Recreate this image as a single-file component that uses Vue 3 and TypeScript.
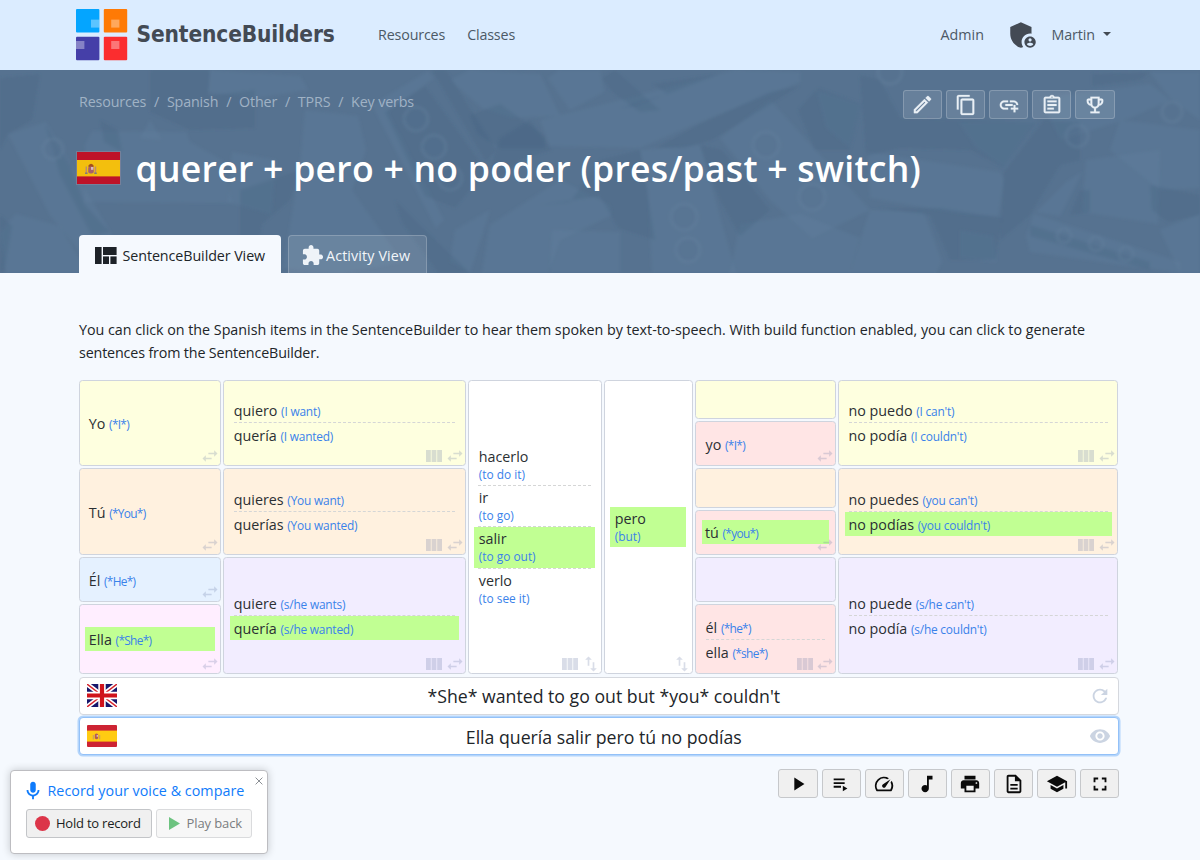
<script setup lang="ts">
interface Item { es: string; en: string; on?: boolean }
interface Cell { area: string; tone: string; items: Item[]; stacked?: boolean; cols?: boolean; swap?: 'h' | 'v' }

const navLeft = ['Resources', 'Classes']
const crumbs = ['Resources', 'Spanish', 'Other', 'TPRS', 'Key verbs']

const heroActions: { name: string; size: number; d: string }[] = [
  { name: 'Edit', size: 23, d: 'M14.06 9.02l.92.92L5.92 19H5v-.92l9.06-9.06M17.66 3c-.25 0-.51.1-.7.29l-1.83 1.83 3.75 3.75 1.83-1.83c.39-.39.39-1.02 0-1.41l-2.34-2.34c-.2-.2-.45-.29-.71-.29zm-3.6 3.19L3 17.25V21h3.75L17.81 9.94l-3.75-3.75z' },
  { name: 'Copy', size: 22, d: 'M16 1H4c-1.1 0-2 .9-2 2v14h2V3h12V1zm3 4H8c-1.1 0-2 .9-2 2v14c0 1.1.9 2 2 2h11c1.1 0 2-.9 2-2V7c0-1.1-.9-2-2-2zm0 16H8V7h11v14z' },
  { name: 'Add link', size: 22, d: 'M8 11h8v2H8v-2zm12.1 1H22c0-2.76-2.24-5-5-5h-4v1.9h4c1.71 0 3.1 1.39 3.1 3.1zM3.9 12c0-1.71 1.39-3.1 3.1-3.1h4V7H7c-2.76 0-5 2.24-5 5s2.24 5 5 5h4v-1.9H7c-1.71 0-3.1-1.39-3.1-3.1zM19 12h-2v3h-3v2h3v3h2v-3h3v-2h-3v-3z' },
  { name: 'Assign', size: 22, d: 'M7 15h7v2H7zm0-4h10v2H7zm0-4h10v2H7zm12-4h-4.18C14.4 1.84 13.3 1 12 1c-1.3 0-2.4.84-2.82 2H5c-.14 0-.27.01-.4.04-.39.08-.74.28-1.01.55-.18.18-.33.4-.43.64-.1.23-.16.49-.16.77v14c0 .27.06.54.16.78s.25.45.43.64c.27.27.62.47 1.01.55.13.02.26.03.4.03h14c1.1 0 2-.9 2-2V5c0-1.1-.9-2-2-2zm-7-.25c.41 0 .75.34.75.75s-.34.75-.75.75-.75-.34-.75-.75.34-.75.75-.75zM19 19H5V5h14v14z' },
  { name: 'Compete', size: 22, d: 'M19 5h-2V3H7v2H5c-1.1 0-2 .9-2 2v1c0 2.55 1.92 4.63 4.39 4.94.63 1.5 1.98 2.63 3.61 2.96V19H7v2h10v-2h-4v-3.1c1.63-.33 2.98-1.46 3.61-2.96C19.08 12.63 21 10.55 21 8V7c0-1.1-.9-2-2-2zM5 8V7h2v3.82C5.84 10.4 5 9.3 5 8zm7 6c-1.65 0-3-1.35-3-3V5h6v6c0 1.65-1.35 3-3 3zm7-6c0 1.3-.84 2.4-2 2.82V7h2v1z' },
]

const tools: { name: string; d: string }[] = [
  { name: 'Play', d: 'M8 5v14l11-7z' },
  { name: 'Playlist', d: 'M4 10h12v2H4zm0-4h12v2H4zm0 8h8v2H4zm10 0v6l5-3z' },
  { name: 'Speed', d: 'M20.38 8.57l-1.23 1.85a8 8 0 0 1-.22 7.58H5.07A8 8 0 0 1 15.58 6.85l1.85-1.23A10 10 0 0 0 3.35 19a2 2 0 0 0 1.72 1h13.85a2 2 0 0 0 1.74-1 10 10 0 0 0-.27-10.44zm-9.79 6.84a2 2 0 0 0 2.83 0l5.66-8.49-8.49 5.66a2 2 0 0 0 0 2.83z' },
  { name: 'Music', d: 'M12 3v10.55c-.59-.34-1.27-.55-2-.55-2.21 0-4 1.79-4 4s1.79 4 4 4 4-1.79 4-4V7h4V3h-6z' },
  { name: 'Print', d: 'M19 8H5c-1.66 0-3 1.34-3 3v6h4v4h12v-4h4v-6c0-1.66-1.34-3-3-3zm-3 11H8v-5h8v5zm3-7c-.55 0-1-.45-1-1s.45-1 1-1 1 .45 1 1-.45 1-1 1zm-1-9H6v4h12V3z' },
  { name: 'Document', d: 'M8 16h8v2H8zm0-4h8v2H8zm6-10H6c-1.1 0-2 .9-2 2v16c0 1.1.89 2 1.99 2H18c1.1 0 2-.9 2-2V8l-6-6zm4 18H6V4h7v5h5v11z' },
  { name: 'Learn', d: 'M5 13.18v4L12 21l7-3.82v-4L12 17l-7-3.82zM12 3L1 9l11 6 9-4.91V17h2V9L12 3z' },
  { name: 'Fullscreen', d: 'M7 14H5v5h5v-2H7v-3zm-2-4h2V7h3V5H5v5zm12 7h-3v2h5v-5h-2v3zM14 5v2h3v3h2V5h-5z' },
]

const swapPaths = {
  h: 'M6.99 11L3 15l3.99 4v-3H14v-2H6.99v-3zM21 9l-3.99-4v3H10v2h7.01v3L21 9z',
  v: 'M16 17.01V10h-2v7.01h-3L15 21l4-3.99h-3zM9 3L5 6.99h3V14h2V6.99h3L9 3z',
}

const cells: Cell[] = [
  { area: 'a1', tone: 'yellow', swap: 'h', items: [{ es: 'Yo', en: '(*I*)' }] },
  { area: 'a2', tone: 'orange', swap: 'h', items: [{ es: 'Tú', en: '(*You*)' }] },
  { area: 'a3', tone: 'blue', swap: 'h', items: [{ es: 'Él', en: '(*He*)' }] },
  { area: 'a4', tone: 'pink', swap: 'h', items: [{ es: 'Ella', en: '(*She*)', on: true }] },
  { area: 'b1', tone: 'yellow', swap: 'h', cols: true, items: [{ es: 'quiero', en: '(I want)' }, { es: 'quería', en: '(I wanted)' }] },
  { area: 'b2', tone: 'orange', swap: 'h', cols: true, items: [{ es: 'quieres', en: '(You want)' }, { es: 'querías', en: '(You wanted)' }] },
  { area: 'b3', tone: 'violet', swap: 'h', cols: true, items: [{ es: 'quiere', en: '(s/he wants)' }, { es: 'quería', en: '(s/he wanted)', on: true }] },
  { area: 'c1', tone: 'white', swap: 'v', cols: true, stacked: true, items: [{ es: 'hacerlo', en: '(to do it)' }, { es: 'ir', en: '(to go)' }, { es: 'salir', en: '(to go out)', on: true }, { es: 'verlo', en: '(to see it)' }] },
  { area: 'd1', tone: 'white', swap: 'v', stacked: true, items: [{ es: 'pero', en: '(but)', on: true }] },
  { area: 'e1', tone: 'yellow', items: [] },
  { area: 'e2', tone: 'red', swap: 'h', items: [{ es: 'yo', en: '(*I*)' }] },
  { area: 'e3', tone: 'orange', items: [] },
  { area: 'e4', tone: 'red', swap: 'h', items: [{ es: 'tú', en: '(*you*)', on: true }] },
  { area: 'e5', tone: 'violet', items: [] },
  { area: 'e6', tone: 'red', swap: 'h', cols: true, items: [{ es: 'él', en: '(*he*)' }, { es: 'ella', en: '(*she*)' }] },
  { area: 'f1', tone: 'yellow', swap: 'h', cols: true, items: [{ es: 'no puedo', en: "(I can't)" }, { es: 'no podía', en: "(I couldn't)" }] },
  { area: 'f2', tone: 'orange', swap: 'h', cols: true, items: [{ es: 'no puedes', en: "(you can't)" }, { es: 'no podías', en: "(you couldn't)", on: true }] },
  { area: 'f3', tone: 'violet', swap: 'h', cols: true, items: [{ es: 'no puede', en: "(s/he can't)" }, { es: 'no podía', en: "(s/he couldn't)" }] },
]

const darkShapes: string[] = [
  '150,70 210,70 208,96 255,90 255,128 190,130 150,112',
  '0,78 40,74 32,120 8,134 0,150',
  '45,124 70,165 85,205 110,232 92,236 60,175',
  '0,215 12,226 4,273 0,273',
  '385,112 425,86 486,170 455,208 425,196',
  '432,70 446,70 496,150 486,162',
  '490,170 500,138 530,120 552,150 520,160 500,178',
  '395,200 420,225 470,273 438,273 402,222',
  '470,115 500,104 545,136 545,148 500,148 478,134',
  '602,78 615,70 660,110 640,112 612,92',
  '540,205 570,202 600,160 640,150 655,240 618,228 600,196',
  '620,108 668,94 652,84 720,74 635,106',
  '655,148 700,124 770,92 800,86 712,140 684,148',
  '700,145 722,150 770,210 740,236 720,200',
  '798,110 818,88 862,104 850,150 815,150',
  '860,75 880,80 900,118 1036,122 1004,168 970,150 900,148 866,156',
  '876,208 940,208 1002,218 995,260 950,260 930,215',
  '1004,172 1044,120 1080,122 1080,160 1060,165 1030,215 1000,240',
  '1092,74 1150,72 1140,80 1092,86',
  '1150,185 1200,195 1200,215 1168,222 1152,210',
  '1070,215 1090,212 1090,190 1080,190',
  '240,190 300,170 290,200 262,224 256,262 240,262',
  '1030,225 1150,262 1150,270 1030,236',
  '100,120 118,130 122,152 104,142',
]
const lightShapes: string[] = [
  '8,134 46,122 112,235 88,262 50,215',
  '85,145 92,131 186,132 190,142 222,160 232,203 84,202',
  '232,152 276,160 272,215 228,202',
  '305,110 358,116 366,150 352,190 402,262 340,273 283,268 300,166',
  '0,232 16,214 60,226 88,273 6,273',
  '150,120 140,138 162,140',
  '372,105 428,71 434,78 388,112 444,220 436,228',
  '450,80 470,70 540,74 560,116 512,118 482,108',
  '560,70 600,70 604,92 570,110 548,78',
  '540,120 620,100 735,70 800,72 800,82 700,122 640,148 550,146',
  '490,225 560,180 610,205 612,215 560,240 548,273 482,273',
  '455,230 490,210 470,273 450,262',
  '552,230 620,232 620,273 550,273',
  '720,138 770,100 870,210 812,238 770,200',
  '640,150 700,145 736,273 652,273 648,190',
  '740,224 800,214 860,238 850,273 730,273',
  '816,90 862,104 850,148 826,128',
  '868,152 1000,172 1004,180 998,216 962,214 870,198',
  '958,122 1036,120 1005,168 976,148',
  '960,230 994,236 996,262 960,258',
  '870,210 924,212 942,262 936,273 850,273',
  '1034,214 1180,262 1180,273 1030,252 1026,236',
  '1086,160 1160,150 1158,224 1082,212',
  '1082,172 1060,216 1036,212 1066,182',
  '1120,120 1200,130 1200,188 1160,190 1110,150',
  '1160,230 1200,214 1200,273 1180,273',
  '1040,98 1150,84 1170,100 1130,118 1060,140',
  '1150,72 1200,72 1200,120 1170,98',
  '210,70 300,76 308,90 256,98 208,92',
]
const studs: [number, number, number][] = [
  [416, 119, 12], [434, 147, 12], [450, 178, 12], [766, 145, 13], [812, 197, 13], [684, 217, 13], [688, 250, 12],
  [53, 149, 10], [1077, 136, 11], [1172, 112, 10], [1064, 236, 7], [1096, 244, 7], [1126, 254, 7], [890, 72, 12],
]

// Starred glosses are set tighter than plain ones.
const isStarred = (s: string): boolean => s.includes('*')
</script>

<template>
  <div class="page">
    <header class="topbar">
      <a class="brand">
        <svg class="logo" width="52" height="52" viewBox="0 0 52 52">
          <rect x="0" y="0" width="23.4" height="23.4" rx="1" fill="#04a5ff" />
          <rect x="27.8" y="0" width="23.4" height="23.4" rx="1" fill="#ff7a05" />
          <rect x="0" y="27.8" width="23.4" height="23.4" rx="1" fill="#453fa8" />
          <rect x="27.8" y="27.8" width="23.4" height="23.4" rx="1" fill="#fb2d2f" />
          <g fill="#fff" fill-opacity=".35">
            <rect x="15" y="10.6" width="8.4" height="8" />
            <rect x="35.2" y="10.6" width="8.2" height="8" />
            <rect x="0" y="32" width="8.4" height="8" />
            <rect x="35.2" y="32" width="8.2" height="8" />
          </g>
        </svg>
        <span class="brand-name">SentenceBuilders</span>
      </a>
      <nav class="nav-left">
        <a v-for="n in navLeft" :key="n">{{ n }}</a>
      </nav>
      <nav class="nav-right">
        <a>Admin</a>
        <svg class="shield" width="34" height="34" viewBox="0 0 24 24" fill="#434a54">
          <path d="M17 11c.34 0 .67.04 1 .09V6.27L10.5 3 3 6.27v4.91c0 4.54 3.2 8.79 7.5 9.82.55-.13 1.08-.32 1.6-.55-.69-.98-1.1-2.17-1.1-3.45 0-3.31 2.69-6 6-6z" />
          <path fill-rule="evenodd" d="M17 13c-2.21 0-4 1.79-4 4s1.79 4 4 4 4-1.79 4-4-1.79-4-4-4zm0 1.38c.62 0 1.12.51 1.12 1.12s-.51 1.12-1.12 1.12-1.12-.51-1.12-1.12.5-1.12 1.12-1.12zm0 5.37c-.93 0-1.74-.46-2.24-1.17.05-.72 1.51-1.08 2.24-1.08s2.19.36 2.24 1.08c-.5.71-1.31 1.17-2.24 1.17z" />
        </svg>
        <a class="user"><span>Martin</span><i class="caret"></i></a>
      </nav>
    </header>

    <section class="hero">
      <svg class="bricks" viewBox="0 70 1200 203" preserveAspectRatio="none">
        <defs><filter id="soft"><feGaussianBlur stdDeviation="1.4" /></filter></defs>
        <g filter="url(#soft)">
          <polygon v-for="(p, i) in lightShapes" :key="'l' + i" :points="p" fill="#6384a6" fill-opacity=".22" />
          <polygon v-for="(p, i) in darkShapes" :key="'d' + i" :points="p" fill="#415f80" fill-opacity=".26" />
          <circle v-for="(s, i) in studs" :key="'s' + i" :cx="s[0]" :cy="s[1]" :r="s[2]" fill="#56728f" fill-opacity=".25" stroke="#6a87a5" stroke-opacity=".28" stroke-width="3" />
        </g>
      </svg>
      <div class="hero-inner">
        <div class="hero-top">
          <ol class="crumbs">
            <li v-for="c in crumbs" :key="c">{{ c }}</li>
          </ol>
          <div class="hero-actions">
            <button v-for="a in heroActions" :key="a.name" :aria-label="a.name" class="hbtn">
              <svg :width="a.size" :height="a.size" viewBox="0 0 24 24"><path :d="a.d" /></svg>
            </button>
          </div>
        </div>
        <div class="title-row">
          <svg class="flag-lg" width="43" height="32" viewBox="0 0 43 32">
            <rect width="43" height="32" fill="#be1228" />
            <rect y="8" width="43" height="16.4" fill="#f3bf0d" />
            <g>
              <rect x="8.6" y="14.5" width="1.4" height="7" fill="#b98b72" />
              <rect x="17.8" y="14.5" width="1.4" height="7" fill="#b98b72" />
              <path d="M11.5 13.2q2.6-3 5 0v2h-5z" fill="#a3501b" />
              <rect x="11.2" y="14.6" width="5.6" height="6.8" rx="2" fill="#a8606a" />
              <rect x="14" y="15" width="2.4" height="2.8" fill="#d9bfc0" />
              <rect x="8" y="20.6" width="2.6" height="1.2" fill="#6b6f8f" /><rect x="17.2" y="20.6" width="2.6" height="1.2" fill="#6b6f8f" />
            </g>
          </svg>
          <h1>querer + pero + no poder (pres/past + switch)</h1>
        </div>
        <div class="tabs">
          <a class="tab active">
            <svg width="22" height="17" viewBox="0 0 22 17" fill="#1d2228">
              <rect x="0" y="0" width="6.6" height="17" /><rect x="8" y="0" width="13.6" height="8" />
              <rect x="8" y="9.4" width="6" height="7.6" /><rect x="15.4" y="9.4" width="6.2" height="7.6" />
            </svg>
            <span>SentenceBuilder View</span>
          </a>
          <a class="tab ghost">
            <svg width="23" height="23" viewBox="0 0 24 24" fill="#eef3f8"><path d="M20.5 11H19V7c0-1.1-.9-2-2-2h-4V3.5C13 2.12 11.88 1 10.5 1S8 2.12 8 3.5V5H4c-1.1 0-1.99.9-1.99 2v3.8H3.5c1.49 0 2.7 1.21 2.7 2.7s-1.21 2.7-2.7 2.7H2V20c0 1.1.9 2 2 2h3.8v-1.5c0-1.49 1.21-2.7 2.7-2.7 1.49 0 2.7 1.21 2.7 2.7V22H17c1.1 0 2-.9 2-2v-4h1.5c1.38 0 2.5-1.12 2.5-2.5S21.88 11 20.5 11z" /></svg>
            <span>Activity View</span>
          </a>
        </div>
      </div>
    </section>

    <main class="content">
      <p class="intro">
        <span class="l1">You can click on the Spanish items in the SentenceBuilder to hear them spoken by text-to-speech. With build function enabled, you can click to generate</span><br />
        <span class="l2">sentences from the SentenceBuilder.</span>
      </p>

      <div class="builder">
        <div v-for="c in cells" :key="c.area" class="cell" :class="[c.area, c.tone, { stacked: c.stacked }]">
          <div v-for="(it, i) in c.items" :key="i" class="item" :class="{ on: it.on }">
            <span class="es">{{ it.es }}</span>{{ ' ' }}<span class="en" :class="{ starred: isStarred(it.en) }">{{ it.en }}</span>
          </div>
          <div v-if="c.swap" class="marks">
            <svg v-if="c.cols" width="16" height="12" viewBox="0 0 16 12" fill="currentColor">
              <rect width="4.8" height="12" /><rect x="5.6" width="4.8" height="12" /><rect x="11.2" width="4.8" height="12" />
            </svg>
            <svg width="20" height="20" viewBox="0 0 24 24" fill="currentColor"><path :d="swapPaths[c.swap]" /></svg>
          </div>
        </div>
      </div>

      <div class="sentence">
        <svg class="flag" width="30" height="23" viewBox="0 0 30 23">
          <rect width="30" height="23" fill="#16166b" />
          <path d="M0 0L30 23M30 0L0 23" stroke="#fff" stroke-width="4.6" />
          <path d="M0 0L15 11.5M30 23L15 11.5M30 0L15 11.5M0 23L15 11.5" stroke="#d5232d" stroke-width="1.4" />
          <path d="M15 0V23M0 11.5H30" stroke="#fff" stroke-width="7.4" />
          <path d="M15 0V23M0 11.5H30" stroke="#d0131b" stroke-width="4.2" />
        </svg>
        <span class="phrase">*She* wanted to go out but *you* couldn't</span>
        <svg width="22" height="22" viewBox="0 0 24 24" class="side"><path d="M17.65 6.35C16.2 4.9 14.21 4 12 4c-4.42 0-7.99 3.58-7.99 8s3.57 8 7.99 8c3.73 0 6.84-2.55 7.73-6h-2.08c-.82 2.33-3.04 4-5.65 4-3.31 0-6-2.69-6-6s2.69-6 6-6c1.66 0 3.14.69 4.22 1.78L13 11h7V4l-2.35 2.35z" /></svg>
      </div>
      <div class="sentence focus">
        <svg class="flag" width="30" height="22" viewBox="0 0 30 22">
          <rect width="30" height="22" rx="1" fill="#cd2333" />
          <rect y="5.6" width="30" height="11" fill="#ffcb12" />
          <rect x="5.8" y="10" width="1" height="4.4" fill="#c09a70" /><rect x="12.2" y="10" width="1" height="4.4" fill="#c09a70" />
          <path d="M7.8 9.4q1.7-1.8 3.4 0v3.8q-1.7 2.2-3.4 0z" fill="#b05a58" />
          <rect x="9.6" y="10" width="1.4" height="1.8" fill="#dcb9b4" />
        </svg>
        <span class="phrase">Ella quería salir pero tú no podías</span>
        <svg width="22" height="22" viewBox="0 0 24 24" class="side"><path d="M12 4.5C7 4.5 2.73 7.61 1 12c1.73 4.39 6 7.5 11 7.5s9.27-3.11 11-7.5c-1.73-4.39-6-7.5-11-7.5zM12 17c-2.76 0-5-2.24-5-5s2.24-5 5-5 5 2.24 5 5-2.24 5-5 5zm0-8c-1.66 0-3 1.34-3 3s1.34 3 3 3 3-1.34 3-3-1.34-3-3-3z" /></svg>
      </div>

      <div class="tools">
        <button v-for="t in tools" :key="t.name" :aria-label="t.name" class="tbtn">
          <svg width="22" height="22" viewBox="0 0 24 24"><path :d="t.d" /></svg>
        </button>
      </div>
    </main>

    <aside class="recorder">
      <svg class="close" width="8" height="8" viewBox="0 0 8 8"><path d="M.6.6l6.8 6.8M7.4.6L.6 7.4" stroke="#8b8f94" stroke-width="1" /></svg>
      <div class="rec-title">
        <svg width="22" height="22" viewBox="0 0 24 24" fill="#0f7bfb"><path d="M12 14c1.66 0 3-1.34 3-3V5c0-1.66-1.34-3-3-3S9 3.34 9 5v6c0 1.66 1.34 3 3 3z" /><path d="M17 11c0 2.76-2.24 5-5 5s-5-2.24-5-5H5c0 3.53 2.61 6.43 6 6.92V21h2v-3.08c3.39-.49 6-3.39 6-6.92h-2z" /></svg>
        <span>Record your voice &amp; compare</span>
      </div>
      <div class="rec-buttons">
        <button class="rbtn hold"><i class="dot"></i><span>Hold to record</span></button>
        <button class="rbtn back"><svg width="11" height="13" viewBox="0 0 11 13"><path d="M0 0v13l11-6.5z" fill="#6dc380" /></svg><span>Play back</span></button>
      </div>
    </aside>
  </div>
</template>

<style>
body { margin: 0; background: #f5f9fe; }
</style>

<style scoped>
* { box-sizing: border-box; }
.page {
  position: relative; width: 1200px; height: 860px; overflow: hidden; background: #f5f9fe;
  font-family: "Open Sans", "Noto Sans", sans-serif; font-size: 14.3px; color: #212529;
}
button { font: inherit; padding: 0; margin: 0; }
svg { display: block; flex: none; }

.topbar { display: flex; align-items: center; height: 70px; padding: 0 89px 0 75.5px; background: #dbecff; color: #4c5966; }
.brand { display: flex; align-items: center; gap: 9px; width: 302.5px; }
.brand-name { font-family: "DejaVu Sans Condensed", "DejaVu Sans", sans-serif; font-stretch: condensed; font-weight: 700; font-size: 22.5px; letter-spacing: -.13px; color: #434a54; white-space: nowrap; padding-bottom: 2px; }
.nav-left { display: flex; gap: 22px; flex: 1; letter-spacing: -.16px; padding-bottom: 2px; }
.nav-right { display: flex; align-items: center; }
.nav-right a:first-child, .user span { padding-bottom: 2px; }
.shield { margin: 0 11.5px 0 22px; }
.user { display: flex; align-items: center; gap: 8px; letter-spacing: -.1px; }
.caret { border: 4.5px solid transparent; border-top-color: #434a54; border-bottom: 0; margin-bottom: 2px; }

.hero { position: relative; height: 203px; background: #567290; }
.bricks { position: absolute; inset: 0; width: 1200px; height: 203px; }
.hero-inner { position: relative; display: flex; flex-direction: column; height: 100%; padding: 20px 85.5px 0 77px; }
.hero-top { display: flex; justify-content: space-between; height: 29px; }
.crumbs { display: flex; margin: 0; padding: 0 0 0 2px; list-style: none; line-height: 24px; color: #a0b2c5; letter-spacing: -.15px; }
.crumbs li + li::before { content: "/"; padding: 0 7.8px; }
.hero-actions { display: flex; gap: 3.8px; }
.hbtn { display: flex; align-items: center; justify-content: center; width: 39.3px; height: 29px; border: 1px solid rgba(255, 255, 255, .2); border-radius: 3px; background: rgba(255, 255, 255, .1); fill: #eaf0f6; stroke: #eaf0f6; stroke-width: .25px; }
.title-row { display: flex; align-items: center; gap: 15.5px; height: 60px; margin-top: 19px; }
.flag-lg { margin-top: -1px; outline: 1px solid rgba(170, 150, 165, .35); }
h1 { margin: 0; font-size: 35.6px; font-weight: 600; line-height: 60px; letter-spacing: .26px; color: #fff; white-space: nowrap; }
.tabs { display: flex; gap: 7.5px; margin: auto 0 0 2px; }
.tab { display: flex; align-items: center; height: 38px; border-radius: 4px 4px 0 0; white-space: nowrap; }
.active { width: 201.5px; padding: 3px 0 0 15.5px; gap: 6px; background: #f5f9fe; letter-spacing: -.08px; }
.ghost { width: 139px; padding: 2px 0 0 11.5px; gap: 2.5px; border: 1px solid rgba(255, 255, 255, .2); border-bottom: 0; background: rgba(255, 255, 255, .1); color: #f2f6fa; letter-spacing: .12px; }
.tab span { padding-bottom: 1px; }

.content { padding: 46px 81px 0 79px; }
.intro { margin: 0; height: 60.6px; line-height: 22.5px; white-space: nowrap; }
.l1 { letter-spacing: -.017px; }
.l2 { letter-spacing: -.15px; }

.builder {
  display: grid; gap: 2.3px 2.4px; width: 1039.4px;
  grid-template-columns: 142px 242.2px 133.6px 88.8px 140.6px 280.2px;
  grid-template-rows: 39.3px 44.9px 39.3px 44.9px 45px 69.6px;
}
.cell { position: relative; display: flex; flex-direction: column; justify-content: center; padding: 0 5.4px; border: 1px solid #cfd4de; border-radius: 3.5px; color: #2b2f33; min-width: 0; }
.a1 { grid-area: 1 / 1 / 3 / 2; } .a2 { grid-area: 3 / 1 / 5 / 2; } .a3 { grid-area: 5 / 1 / 6 / 2; } .a4 { grid-area: 6 / 1 / 7 / 2; }
.b1 { grid-area: 1 / 2 / 3 / 3; } .b2 { grid-area: 3 / 2 / 5 / 3; } .b3 { grid-area: 5 / 2 / 7 / 3; }
.c1 { grid-area: 1 / 3 / 7 / 4; } .d1 { grid-area: 1 / 4 / 7 / 5; }
.e1 { grid-area: 1 / 5 / 2 / 6; } .e2 { grid-area: 2 / 5 / 3 / 6; } .e3 { grid-area: 3 / 5 / 4 / 6; }
.e4 { grid-area: 4 / 5 / 5 / 6; } .e5 { grid-area: 5 / 5 / 6 / 6; } .e6 { grid-area: 6 / 5 / 7 / 6; }
.f1 { grid-area: 1 / 6 / 3 / 7; } .f2 { grid-area: 3 / 6 / 5 / 7; } .f3 { grid-area: 5 / 6 / 7 / 7; }
.yellow { background: #feffdf; } .orange { background: #fff1df; } .blue { background: #e5f1ff; }
.pink { background: #ffeeff; } .violet { background: #f2edff; } .red { background: #ffe5e5; } .white { background: #fff; }

.item { position: relative; height: 24px; line-height: 25px; padding: 0 4px; white-space: nowrap; }
.a1 .item, .a2 .item, .a3 .item, .a4 .item, .e4 .item { padding-left: 3.4px; }
.item + .item { margin-top: 1px; }
.item + .item::before { content: ""; position: absolute; left: 4px; right: 4px; top: -1px; border-top: 1px dashed #d5d6d6; }
.item.on { background: #c1ff93; }
.es { font-size: 14.3px; }
.en { font-size: 11.9px; letter-spacing: -.2px; color: #3a82ea; }
.en.starred { letter-spacing: -.7px; }
.stacked .item { height: 40.3px; line-height: normal; display: flex; flex-direction: column; padding-left: 4.4px; }
.stacked .es { line-height: 24px; height: 20px; }
.stacked .en { line-height: 19px; height: 18px; letter-spacing: 0; }
.marks { position: absolute; right: -.3px; bottom: -1px; display: flex; align-items: center; gap: 2.4px; color: rgba(105, 118, 165, .25); }
.f1 .marks, .f2 .marks, .f3 .marks { right: .7px; }

.sentence { display: flex; align-items: center; width: 1039.6px; height: 38px; margin-top: 2.6px; padding: 0 7px; border: 1px solid #d5d8de; border-radius: 4px; background: #fff; }
.flag { width: 30px; }
.phrase { flex: 1; text-align: center; font-size: 17.7px; line-height: 36px; padding: 1px 0 0 2px; }
.side { fill: #cbd4e2; }
.focus { border-color: #93c1f8; box-shadow: 0 0 0 1.5px #b4d5fb; }
.tools { display: flex; justify-content: flex-end; gap: 3.8px; margin-top: 13.6px; width: 1040.4px; }
.tbtn { display: flex; align-items: center; justify-content: center; width: 39.3px; height: 29.5px; border: 1px solid #c6c8cb; border-radius: 3px; background: #f0f0f0; fill: #0a0a0a; }

.recorder { position: absolute; left: 10px; top: 770px; width: 258px; height: 84px; padding: 8.5px 0 0 15px; border: 1px solid #bdbdc1; border-radius: 4px; background: #fff; box-shadow: 0 0 9px rgba(0, 0, 0, .2); }
.close { position: absolute; right: 4.5px; top: 6px; }
.rec-title { display: flex; align-items: center; gap: 3.5px; height: 23px; margin-left: -4px; color: #0f7bfb; white-space: nowrap; letter-spacing: .03px; }
.rec-title span { line-height: 21px; padding-bottom: 2px; }
.rec-buttons { display: flex; gap: 4px; margin-top: 6.5px; }
.rbtn { display: flex; align-items: center; height: 29.4px; border: 1px solid #c3c5c8; border-radius: 3px; background: #f0f0f0; font-size: 13px; letter-spacing: -.22px; color: #1b1e22; white-space: nowrap; }
.rbtn span { padding-bottom: 1px; }
.hold { width: 126px; padding-left: 8px; gap: 6px; }
.dot { width: 15px; height: 15px; border-radius: 50%; background: #dc3549; }
.back { width: 96px; padding-left: 12px; gap: 6.5px; border-color: #dadbdd; background: #f7f7f7; color: #7a7d80; letter-spacing: -.1px; }
</style>
